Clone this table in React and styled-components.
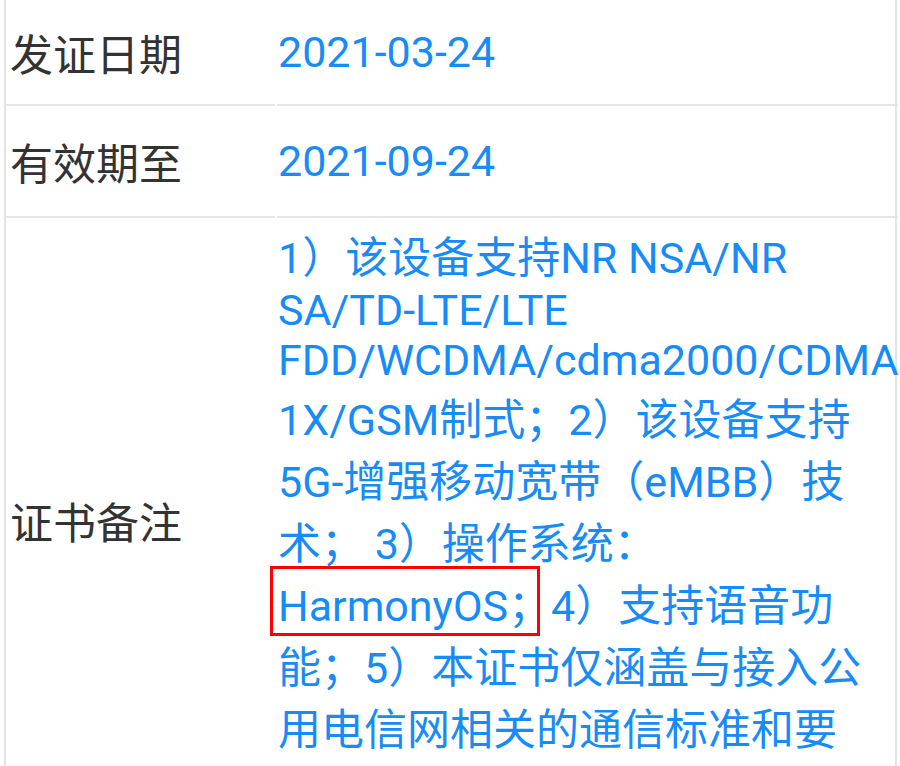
import React from "react";
import styled, { createGlobalStyle } from "styled-components";

const Global = createGlobalStyle`
  html, body {
    margin: 0;
    padding: 0;
    background: #ffffff;
  }
  body {
    font-family: Roboto, "Noto Sans CJK SC", sans-serif;
    font-size: 43px;
  }
`;

const Table = styled.div`
  display: grid;
  grid-template-columns: 269px 1fr;
  column-gap: 2px;
  box-sizing: border-box;
  width: 893px;
  margin-left: 4px;
  border-left: 2px solid #e4e4e4;
  border-right: 2px solid #e4e4e4;
`;

const Cell = styled.div`
  box-sizing: border-box;
  display: flex;
  align-items: center;
  border-bottom: 2px solid #e6e6e6;
  min-height: ${(p) => (p.$h ? `${p.$h}px` : "auto")};
  line-height: normal;
`;

const Label = styled(Cell)`
  padding-left: 4px;
  color: #333333;
`;

const Value = styled(Cell)`
  padding: 5px 0 ${(p) => (p.$tail ? `${p.$tail}px` : "5px")} 1px;
  color: #178cf6;
  white-space: nowrap;
`;

const Lines = styled.div`
  display: block;
`;

const Mark = styled.span`
  position: relative;
  &::after {
    content: "";
    position: absolute;
    left: -8px;
    right: 11px;
    top: -15px;
    bottom: -5px;
    border: 3px solid #ff0000;
    pointer-events: none;
  }
`;

export default function App() {
  return (
    <>
      <Global />
      <Table>
        <Label $h={106}>发证日期</Label>
        <Value $h={106}>2021-03-24</Value>

        <Label $h={112}>有效期至</Label>
        <Value $h={112}>2021-09-24</Value>

        <Label>证书备注</Label>
        <Value $tail={64}>
          <Lines>
            1）该设备支持NR NSA/NR
            <br />
            SA/TD-LTE/LTE
            <br />
            FDD/WCDMA/cdma2000/CDMA
            <br />
            1X/GSM制式；2）该设备支持
            <br />
            5G-增强移动宽带（eMBB）技
            <br />
            术； 3）操作系统：
            <br />
            <Mark>HarmonyOS；</Mark>4）支持语音功
            <br />
            能；5）本证书仅涵盖与接入公
            <br />
            用电信网相关的通信标准和要
          </Lines>
        </Value>
      </Table>
    </>
  );
}
